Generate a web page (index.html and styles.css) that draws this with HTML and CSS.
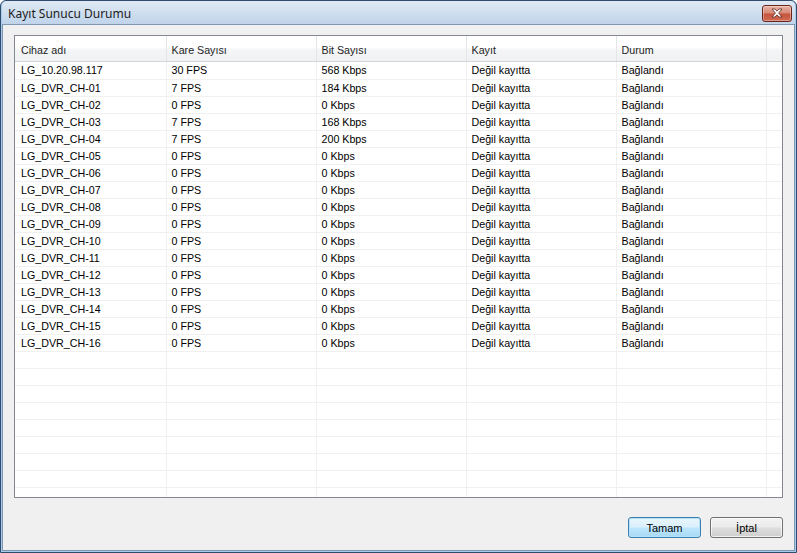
FILE: index.html
```html
<!DOCTYPE html>
<html>
<head>
<meta charset="utf-8">
<link rel="stylesheet" href="styles.css">
</head>
<body>
<div class="window">
  <div class="titlebar">
    <span class="title">Kayıt Sunucu Durumu</span>
    <div class="close">
      <svg width="14" height="10" viewBox="0 0 14 10">
        <path d="M2 1 L5 1 L7 3.2 L9 1 L12 1 L8.6 5 L12 9 L9 9 L7 6.8 L5 9 L2 9 L5.4 5 Z" fill="#fff" stroke="#5b2a22" stroke-width="0.8" stroke-linejoin="round"/>
      </svg>
    </div>
  </div>
  <div class="client">
    <div class="list">
      <table class="grid">
        <colgroup>
          <col class="c1"><col class="c2"><col class="c2"><col class="c2"><col class="c2"><col class="c6">
        </colgroup>
        <thead>
          <tr><th>Cihaz adı</th><th>Kare Sayısı</th><th>Bit Sayısı</th><th>Kayıt</th><th>Durum</th><th></th></tr>
        </thead>
        <tbody>
          <tr class="first"><td>LG_10.20.98.117</td><td>30 FPS</td><td>568 Kbps</td><td>Değil kayıtta</td><td>Bağlandı</td><td></td></tr>
          <tr><td>LG_DVR_CH-01</td><td>7 FPS</td><td>184 Kbps</td><td>Değil kayıtta</td><td>Bağlandı</td><td></td></tr>
          <tr><td>LG_DVR_CH-02</td><td>0 FPS</td><td>0 Kbps</td><td>Değil kayıtta</td><td>Bağlandı</td><td></td></tr>
          <tr><td>LG_DVR_CH-03</td><td>7 FPS</td><td>168 Kbps</td><td>Değil kayıtta</td><td>Bağlandı</td><td></td></tr>
          <tr><td>LG_DVR_CH-04</td><td>7 FPS</td><td>200 Kbps</td><td>Değil kayıtta</td><td>Bağlandı</td><td></td></tr>
          <tr><td>LG_DVR_CH-05</td><td>0 FPS</td><td>0 Kbps</td><td>Değil kayıtta</td><td>Bağlandı</td><td></td></tr>
          <tr><td>LG_DVR_CH-06</td><td>0 FPS</td><td>0 Kbps</td><td>Değil kayıtta</td><td>Bağlandı</td><td></td></tr>
          <tr><td>LG_DVR_CH-07</td><td>0 FPS</td><td>0 Kbps</td><td>Değil kayıtta</td><td>Bağlandı</td><td></td></tr>
          <tr><td>LG_DVR_CH-08</td><td>0 FPS</td><td>0 Kbps</td><td>Değil kayıtta</td><td>Bağlandı</td><td></td></tr>
          <tr><td>LG_DVR_CH-09</td><td>0 FPS</td><td>0 Kbps</td><td>Değil kayıtta</td><td>Bağlandı</td><td></td></tr>
          <tr><td>LG_DVR_CH-10</td><td>0 FPS</td><td>0 Kbps</td><td>Değil kayıtta</td><td>Bağlandı</td><td></td></tr>
          <tr><td>LG_DVR_CH-11</td><td>0 FPS</td><td>0 Kbps</td><td>Değil kayıtta</td><td>Bağlandı</td><td></td></tr>
          <tr><td>LG_DVR_CH-12</td><td>0 FPS</td><td>0 Kbps</td><td>Değil kayıtta</td><td>Bağlandı</td><td></td></tr>
          <tr><td>LG_DVR_CH-13</td><td>0 FPS</td><td>0 Kbps</td><td>Değil kayıtta</td><td>Bağlandı</td><td></td></tr>
          <tr><td>LG_DVR_CH-14</td><td>0 FPS</td><td>0 Kbps</td><td>Değil kayıtta</td><td>Bağlandı</td><td></td></tr>
          <tr><td>LG_DVR_CH-15</td><td>0 FPS</td><td>0 Kbps</td><td>Değil kayıtta</td><td>Bağlandı</td><td></td></tr>
          <tr><td>LG_DVR_CH-16</td><td>0 FPS</td><td>0 Kbps</td><td>Değil kayıtta</td><td>Bağlandı</td><td></td></tr>
          <tr><td></td><td></td><td></td><td></td><td></td><td></td></tr>
          <tr><td></td><td></td><td></td><td></td><td></td><td></td></tr>
          <tr><td></td><td></td><td></td><td></td><td></td><td></td></tr>
          <tr><td></td><td></td><td></td><td></td><td></td><td></td></tr>
          <tr><td></td><td></td><td></td><td></td><td></td><td></td></tr>
          <tr><td></td><td></td><td></td><td></td><td></td><td></td></tr>
          <tr><td></td><td></td><td></td><td></td><td></td><td></td></tr>
          <tr><td></td><td></td><td></td><td></td><td></td><td></td></tr>
          <tr><td></td><td></td><td></td><td></td><td></td><td></td></tr>
          <tr><td></td><td></td><td></td><td></td><td></td><td></td></tr>
        </tbody>
      </table>
    </div>
    <div class="buttons">
      <button class="btn default">Tamam</button>
      <button class="btn">İptal</button>
    </div>
  </div>
</div>
</body>
</html>
```
FILE: styles.css
```css
* { box-sizing: border-box; }
html, body { margin: 0; padding: 0; }
body {
  width: 797px;
  height: 553px;
  overflow: hidden;
  background: #ffffff;
  font-family: "Liberation Sans", Arial, sans-serif;
  font-size: 10.7px;
  color: #000;
}
.window {
  width: 797px;
  height: 553px;
  border: 1px solid #2f4c6c;
  border-radius: 6px 6px 0 0;
  background: #a8cbec;
  padding: 0 1px 1px 1px;
  display: flex;
  flex-direction: column;
  overflow: hidden;
}
.titlebar {
  height: 23px;
  flex: none;
  display: flex;
  align-items: center;
  justify-content: space-between;
  padding: 0 3px 0 6px;
  background: linear-gradient(#e0e9f4 0%, #d3e1f0 40%, #bfd3ea 100%);
  border-radius: 5px 5px 0 0;
}
.title {
  font-family: "Noto Sans", "Open Sans", sans-serif;
  font-size: 12px;
  color: #1c1c1c;
  padding-top: 1px;
}
.close {
  width: 30px;
  height: 17px;
  margin-top: 1px;
  border: 1px solid #6b2418;
  border-radius: 3px;
  background: linear-gradient(#e8b3a7 0%, #d98a78 45%, #c5553f 55%, #cf6a52 100%);
  display: flex;
  align-items: center;
  justify-content: center;
  box-shadow: inset 0 0 0 1px rgba(255,255,255,0.35);
}
.client {
  flex: 1;
  border: 1px solid #7f97b3;
  background: #f0f0f0;
  display: flex;
  flex-direction: column;
}
.list {
  margin: 10px 11px 0 11px;
  height: 463px;
  border: 1px solid #828790;
  background: #fff;
  overflow: hidden;
}
.grid {
  border-collapse: collapse;
  table-layout: fixed;
  width: 767px;
}
.c1 { width: 151px; }
.c2 { width: 150px; }
.c6 { width: 16px; }
.grid th {
  height: 25px;
  padding: 4px 0 0 5px;
  text-align: left;
  font-weight: normal;
  color: #1e1e1e;
  background: linear-gradient(#ffffff 0%, #ffffff 45%, #f4f5f7 55%, #f0f1f3 100%);
  border-right: 1px solid #e3e5e8;
  border-bottom: 1px solid #d5d5d5;
}
.grid th:first-child, .grid td:first-child { padding-left: 6px; }
.grid tbody tr.first td { border-top: 1px solid #fff; height: 18px; }
.grid td {
  height: 17px;
  padding: 1px 0 0 5px;
  white-space: nowrap;
  overflow: hidden;
  border-right: 1px solid #f0f0f0;
  border-bottom: 1px solid #f0f0f0;
  line-height: 15px;
}
.buttons {
  display: flex;
  justify-content: flex-end;
  gap: 9px;
  margin-top: 19px;
  padding-right: 11px;
}
.btn {
  width: 73px;
  height: 21px;
  padding: 0;
  font-family: "Liberation Sans", Arial, sans-serif;
  font-size: 11px;
  color: #000;
  border: 1px solid #707070;
  border-radius: 3px;
  background: linear-gradient(#f2f2f2 0%, #ebebeb 48%, #dddddd 52%, #cfcfcf 100%);
  box-shadow: inset 0 0 0 1px rgba(255,255,255,0.7);
}
.btn.default {
  border-color: #3c7fb1;
  background: linear-gradient(#eaf6fd 0%, #d9f0fc 48%, #bee6fd 52%, #a7d9f5 100%);
  box-shadow: inset 0 0 0 1px #b6e0f7;
}
```
